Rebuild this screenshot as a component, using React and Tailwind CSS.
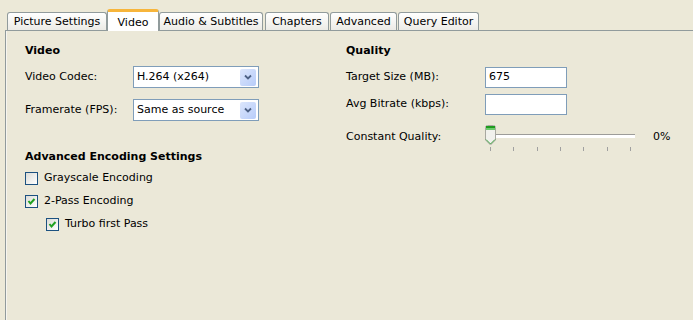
import React from 'react'

const font = { fontFamily: '"DejaVu Sans", Verdana, sans-serif' }

const tabs = [
  { label: 'Picture Settings', w: 'w-[100px]' },
  { label: 'Video', w: 'w-[52px]', active: true },
  { label: 'Audio & Subtitles', w: 'w-[104px]' },
  { label: 'Chapters', w: 'w-[64px] ml-[2px]' },
  { label: 'Advanced', w: 'w-[67px] ml-[1px]' },
  { label: 'Query Editor', w: 'w-[81px] ml-[1px]' },
]

const Tab = ({ label, w, active }) => {
  if (active) {
    return (
      <div className={`${w} relative z-10 -mb-px h-[22px] flex items-start justify-center pt-[3px] bg-white border-x border-[#919B9C] rounded-t-[3px] border-t-[3px] border-t-[#F7B53B]`}>
        <span>{label}</span>
      </div>
    )
  }
  return (
    <div className={`${w} h-[18px] flex items-center justify-center pt-px bg-gradient-to-b from-white to-[#ECEBE6] border border-b-0 border-[#919B9C] rounded-t-[3px]`}>
      <span>{label}</span>
    </div>
  )
}

const Select = ({ value }) => (
  <div className="w-[126px] h-[22px] border border-[#7F9DB9] bg-white flex items-center pl-[3px] pr-[2px]">
    <span className="flex-1">{value}</span>
    <div className="w-[16px] h-[17px] rounded-[2px] bg-gradient-to-br from-[#DCE6FC] to-[#B7CCF9] flex items-center justify-center">
      <svg width="8" height="6" viewBox="0 0 8 6">
        <path d="M1 1.5 L4 4.5 L7 1.5" stroke="#4D6185" strokeWidth="1.8" fill="none" />
      </svg>
    </div>
  </div>
)

const Check = ({ checked, label }) => (
  <div className="flex items-center gap-[6px] h-[14px]">
    <div className="w-[13px] h-[13px] border border-[#1C5180] bg-gradient-to-br from-[#DCDCD7] to-white flex items-center justify-center">
      {checked && (
        <svg width="9" height="9" viewBox="0 0 9 9">
          <path d="M1.5 4 L3.5 6.5 L7.5 2" stroke="#21A121" strokeWidth="2" fill="none" />
        </svg>
      )}
    </div>
    <span>{label}</span>
  </div>
)

const Input = ({ value }) => (
  <div className="w-[82px] h-[21px] border border-[#7F9DB9] bg-white flex items-center pl-[3px]">
    {value}
  </div>
)

const Slider = () => (
  <div className="flex flex-col w-[150px]">
    <div className="flex items-center h-[21px]">
      <svg width="11" height="21" viewBox="0 0 11 21" className="shrink-0">
        <path d="M0.5 2.5 Q0.5 0.5 2.5 0.5 L8.5 0.5 Q10.5 0.5 10.5 2.5 L10.5 15 L5.5 20 L0.5 15 Z" fill="#F1F1EC" stroke="#A8A8A0" />
        <rect x="1" y="1" width="9" height="2" fill="#1E9B1E" />
        <rect x="1" y="3" width="9" height="2" fill="#6CCB6C" />
        <path d="M1 14.5 L5.5 19 L10 14.5" stroke="#3C9E3C" fill="none" />
      </svg>
      <div className="flex-1 h-[4px] border-t border-[#9D9C99] bg-white"></div>
    </div>
    <div className="flex justify-between pl-[5px] pr-[4px] h-[6px] mt-[1px]">
      {[0, 1, 2, 3, 4, 5, 6].map(i => (
        <div key={i} className="w-px h-[4px] bg-[#A0A0A0]"></div>
      ))}
    </div>
  </div>
)

const App = () => {
  return (
    <div className="w-[693px] h-[320px] bg-[#ECE9D8] text-[11px] text-black overflow-hidden pt-[9px] pl-[5px]" style={font}>
      <div className="flex items-end h-[21px] pl-[2px]">
        {tabs.map(t => <Tab key={t.label} {...t} />)}
      </div>
      <div className="h-[290px] border-t border-l border-[#919B9C] bg-[#EBE8D8] flex">
        <div className="w-px h-full bg-[#F6F5F0]"></div>
        {/* left column */}
        <div className="w-[320px] pl-[18px] pt-[13px] flex flex-col">
          <div className="font-bold h-[14px] leading-[14px]">Video</div>
          <div className="flex items-center mt-[8px] h-[22px]">
            <span className="w-[108px]">Video Codec:</span>
            <Select value="H.264 (x264)" />
          </div>
          <div className="flex items-center mt-[11px] h-[22px]">
            <span className="w-[108px]">Framerate (FPS):</span>
            <Select value="Same as source" />
          </div>
          <div className="font-bold mt-[29px] h-[14px] leading-[14px]">Advanced Encoding Settings</div>
          <div className="mt-[7px]"><Check label="Grayscale Encoding" /></div>
          <div className="mt-[9px]"><Check checked label="2-Pass Encoding" /></div>
          <div className="mt-[9px] pl-[21px]"><Check checked label="Turbo first Pass" /></div>
        </div>
        {/* right column */}
        <div className="flex-1 pl-[19px] pt-[13px] flex flex-col">
          <div className="font-bold h-[14px] leading-[14px]">Quality</div>
          <div className="flex items-center mt-[9px] h-[21px]">
            <span className="w-[139px]">Target Size (MB):</span>
            <Input value="675" />
          </div>
          <div className="flex items-center mt-[6px] h-[21px]">
            <span className="w-[139px]">Avg Bitrate (kbps):</span>
            <Input value="" />
          </div>
          <div className="flex items-start mt-[10px]">
            <span className="w-[139px] pt-[4px]">Constant Quality:</span>
            <Slider />
            <span className="ml-[18px] pt-[4px]">0%</span>
          </div>
        </div>
      </div>
    </div>
  )
}

export default App
